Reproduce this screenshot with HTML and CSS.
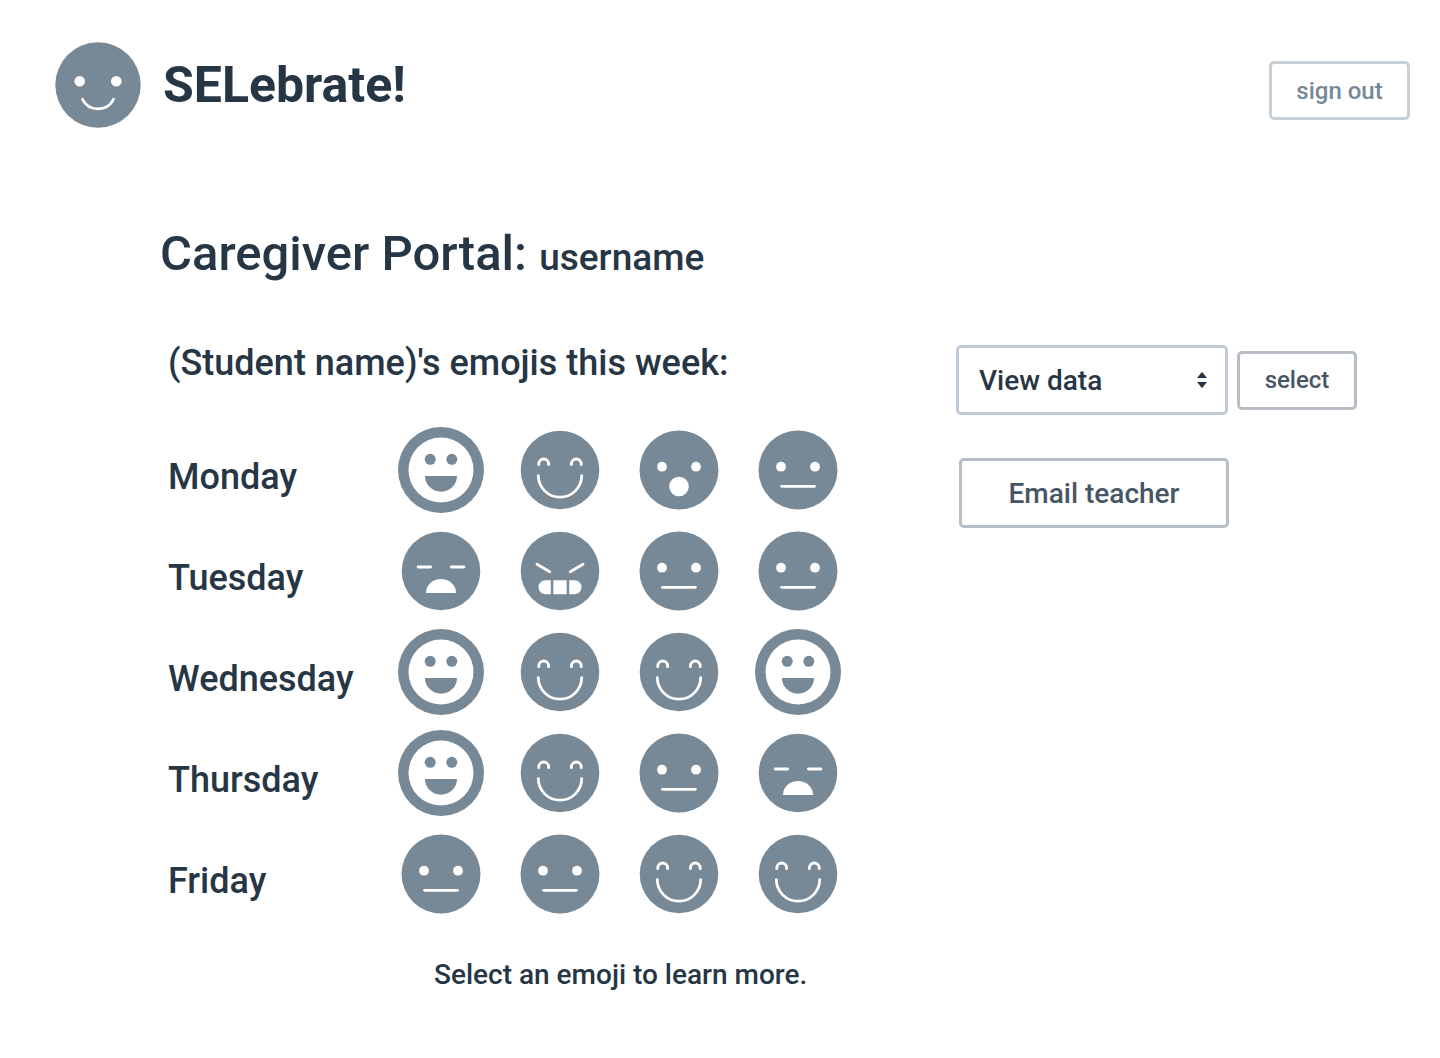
FILE: index.html
```html
<!DOCTYPE html>
<html lang="en">
<head>
<meta charset="utf-8">
<meta name="viewport" content="width=device-width, initial-scale=1">
<title>SELebrate! Caregiver Portal</title>
<link rel="stylesheet" href="styles.css">
</head>
<body>
<svg class="sprite" aria-hidden="true">
  <symbol id="grin" viewBox="-43 -43 86 86">
    <circle class="face" r="43"/><circle class="light" r="32.5"/>
    <circle class="face" cx="-10.8" cy="-10.7" r="5.5"/><circle class="face" cx="10.8" cy="-10.7" r="5.5"/>
    <path class="face" d="M-16 6H16A16 15.7 0 0 1-16 6Z"/>
  </symbol>
  <symbol id="happy" viewBox="-43 -43 86 86">
    <circle class="face" r="39.3"/>
    <path class="line" d="M-21.2-5.3v-.8a4.9 4.9 0 0 1 9.8 0v.8M11.4-5.3v-.8a4.9 4.9 0 0 1 9.8 0v.8M-21.7 5.6a21.7 21.6 0 0 0 43.4 0"/>
  </symbol>
  <symbol id="surprised" viewBox="-43 -43 86 86">
    <circle class="face" r="39.5"/>
    <circle class="light" cx="-17" cy="-3.3" r="4.9"/><circle class="light" cx="17" cy="-3.3" r="4.9"/>
    <circle class="light" cy="16.5" r="9.8"/>
  </symbol>
  <symbol id="neutral" viewBox="-43 -43 86 86">
    <circle class="face" r="39.5"/>
    <circle class="light" cx="-17" cy="-3.3" r="4.9"/><circle class="light" cx="17" cy="-3.3" r="4.9"/>
    <path class="line" d="M-16.4 16.3H16.4"/>
  </symbol>
  <symbol id="sad" viewBox="-43 -43 86 86">
    <circle class="face" r="39.3"/>
    <path class="line" d="M-22.9-4H-10.4M10.4-4H22.9"/>
    <path class="light" d="M-15 22A15 14 0 0 1 15 22Z"/>
  </symbol>
  <symbol id="angry" viewBox="-43 -43 86 86">
    <circle class="face" r="39.3"/>
    <path class="line" d="M-23-6.7L-10.3.7M23-6.7L10.3.7"/>
    <path class="light" d="M-9.2 9.3H-14.5a7 7 0 0 0 0 14H-9.2ZM-6.7 9.3H6.7V23.3H-6.7ZM9.2 9.3H14.5a7 7 0 0 1 0 14H9.2Z"/>
  </symbol>
</svg>

<header class="header">
  <a class="brand" href="#">
    <svg class="brand-logo" viewBox="-43 -43 86 86" aria-hidden="true">
      <circle class="face" r="42.7"/>
      <circle class="light" cx="-18.3" cy="-3.7" r="5.3"/><circle class="light" cx="18.3" cy="-3.7" r="5.3"/>
      <path class="line" d="M-15.5 14.3A17.4 17.4 0 0 0 15.5 14.3"/>
    </svg>
    <span>SELebrate!</span>
  </a>
  <button class="button button-quiet" type="button">sign out</button>
</header>

<main class="main">
  <h1 class="title">Caregiver Portal: <span class="username">username</span></h1>
  <div class="columns">
    <section class="week">
      <h2 class="week-title" id="week-title">(Student name)'s emojis this week:</h2>
      <table class="days" aria-labelledby="week-title">
        <tbody>
          <tr>
            <th scope="row">Monday</th>
            <td><button class="emoji" type="button" aria-label="Grinning"><svg><use href="#grin"/></svg></button></td>
            <td><button class="emoji" type="button" aria-label="Happy"><svg><use href="#happy"/></svg></button></td>
            <td><button class="emoji" type="button" aria-label="Surprised"><svg><use href="#surprised"/></svg></button></td>
            <td><button class="emoji" type="button" aria-label="Neutral"><svg><use href="#neutral"/></svg></button></td>
          </tr>
          <tr>
            <th scope="row">Tuesday</th>
            <td><button class="emoji" type="button" aria-label="Sad"><svg><use href="#sad"/></svg></button></td>
            <td><button class="emoji" type="button" aria-label="Angry"><svg><use href="#angry"/></svg></button></td>
            <td><button class="emoji" type="button" aria-label="Neutral"><svg><use href="#neutral"/></svg></button></td>
            <td><button class="emoji" type="button" aria-label="Neutral"><svg><use href="#neutral"/></svg></button></td>
          </tr>
          <tr>
            <th scope="row">Wednesday</th>
            <td><button class="emoji" type="button" aria-label="Grinning"><svg><use href="#grin"/></svg></button></td>
            <td><button class="emoji" type="button" aria-label="Happy"><svg><use href="#happy"/></svg></button></td>
            <td><button class="emoji" type="button" aria-label="Happy"><svg><use href="#happy"/></svg></button></td>
            <td><button class="emoji" type="button" aria-label="Grinning"><svg><use href="#grin"/></svg></button></td>
          </tr>
          <tr>
            <th scope="row">Thursday</th>
            <td><button class="emoji" type="button" aria-label="Grinning"><svg><use href="#grin"/></svg></button></td>
            <td><button class="emoji" type="button" aria-label="Happy"><svg><use href="#happy"/></svg></button></td>
            <td><button class="emoji" type="button" aria-label="Neutral"><svg><use href="#neutral"/></svg></button></td>
            <td><button class="emoji" type="button" aria-label="Sad"><svg><use href="#sad"/></svg></button></td>
          </tr>
          <tr>
            <th scope="row">Friday</th>
            <td><button class="emoji" type="button" aria-label="Neutral"><svg><use href="#neutral"/></svg></button></td>
            <td><button class="emoji" type="button" aria-label="Neutral"><svg><use href="#neutral"/></svg></button></td>
            <td><button class="emoji" type="button" aria-label="Happy"><svg><use href="#happy"/></svg></button></td>
            <td><button class="emoji" type="button" aria-label="Happy"><svg><use href="#happy"/></svg></button></td>
          </tr>
        </tbody>
      </table>
      <p class="hint">Select an emoji to learn more.</p>
    </section>

    <aside class="actions">
      <form class="picker">
        <div class="dropdown">
          <select class="dropdown-field" aria-label="Data view">
            <option>View data</option>
          </select>
          <svg class="dropdown-arrows" viewBox="0 0 10 16" aria-hidden="true"><path d="M0 6L4.4.6Q5 0 5.6.6L10 6ZM0 10H10L5.6 15.4Q5 16 4.4 15.4Z"/></svg>
        </div>
        <button class="button" type="button">select</button>
      </form>
      <button class="button button-large" type="button">Email teacher</button>
    </aside>
  </div>
</main>
</body>
</html>
```
FILE: styles.css
```css
* {
  box-sizing: border-box;
}

body {
  margin: 0;
  background: #fff;
  color: #273644;
  font-family: Roboto, "Liberation Sans", sans-serif;
  font-size: 36px;
  font-weight: 500;
}

h1, h2, p {
  margin: 0;
  font-weight: 500;
}

.sprite {
  display: none;
}

.face {
  fill: #778896;
}

.light {
  fill: #fff;
}

.line {
  fill: none;
  stroke: #fff;
  stroke-width: 2.8;
  stroke-linecap: round;
}

.header {
  display: flex;
  justify-content: space-between;
  align-items: flex-end;
  padding: 42px 30px 0 55px;
}

.brand {
  display: flex;
  align-items: center;
  gap: 22px;
  color: inherit;
  font-size: 50px;
  font-weight: 700;
  line-height: 56px;
  text-decoration: none;
}

.brand-logo {
  width: 86px;
  height: 86px;
}

.button {
  height: 59px;
  padding: 0 20px;
  border: 3px solid #b7bec5;
  border-radius: 5px;
  background: #fff;
  color: #465665;
  font: 500 24px Roboto, "Liberation Sans", sans-serif;
  cursor: pointer;
}

.button-quiet {
  width: 141px;
  margin-bottom: 8px;
  border-color: #c8d0d7;
  color: #778896;
}

.button-large {
  width: 270px;
  height: 70px;
  font-size: 28px;
}

.main {
  padding: 96px 83px 60px 160px;
}

.title {
  font-size: 49px;
  line-height: 60px;
}

.username {
  font-size: 37px;
}

.columns {
  display: grid;
  grid-template-columns: minmax(0, 1fr) 401px;
  margin-top: 51px;
}

.week-title {
  padding-left: 8px;
  font-size: 36px;
  line-height: 48px;
}

.days {
  margin-top: 32px;
  border-collapse: collapse;
}

.days th {
  width: 221px;
  padding: 14px 0 0 8px;
  font-weight: 500;
  text-align: left;
}

.days td {
  width: 119px;
  height: 101px;
  padding: 0;
  text-align: center;
}

.emoji {
  display: inline-grid;
  padding: 0;
  border: 0;
  border-radius: 50%;
  background: none;
  vertical-align: middle;
  cursor: pointer;
}

.emoji svg {
  width: 86px;
  height: 86px;
}

.hint {
  padding-left: 274px;
  margin-top: 32px;
  font-size: 28px;
  line-height: 38px;
}

.actions {
  padding-top: 6px;
}

.picker {
  display: flex;
  align-items: center;
  gap: 9px;
  margin-bottom: 43px;
}

.picker .button {
  width: 120px;
}

.dropdown {
  display: grid;
  flex: 1;
  align-items: center;
}

.dropdown-field {
  grid-area: 1 / 1;
  width: 100%;
  height: 70px;
  padding: 0 20px;
  appearance: none;
  border: 3px solid #bfcad4;
  border-radius: 5px;
  background: #fff;
  color: #273644;
  font: 500 28px Roboto, "Liberation Sans", sans-serif;
}

.dropdown-arrows {
  grid-area: 1 / 1;
  justify-self: end;
  width: 10px;
  height: 16px;
  margin-right: 21px;
  fill: #273644;
  pointer-events: none;
}

.actions > .button {
  margin-left: 3px;
}
```
